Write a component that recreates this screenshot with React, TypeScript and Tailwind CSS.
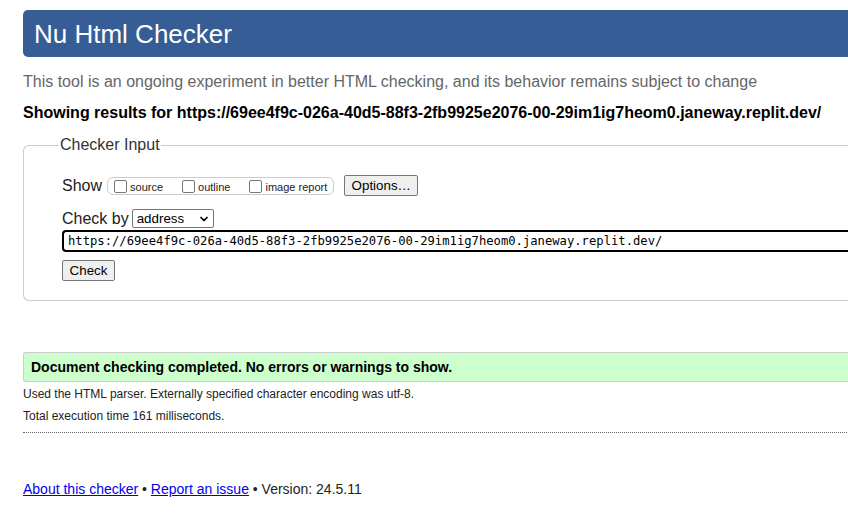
import { ChevronDown } from 'lucide-react'

const URL = 'https://69ee4f9c-026a-40d5-88f3-2fb9925e2076-00-29im1ig7heom0.janeway.replit.dev/'

function Checkbox({ label }: { label: string }) {
  return (
    <label className="flex items-center">
      <span className="w-[13px] h-[13px] border border-[#767676] rounded-[2px] bg-white mr-[3px] mt-[1px]" />
      <span className="text-[11px] mt-[3px] text-[#222]">{label}</span>
    </label>
  )
}

export default function App() {
  return (
    <div className="w-full h-[519px] overflow-hidden bg-white text-[#222]" style={{ fontFamily: '"Liberation Sans", Arial, sans-serif' }}>
      <div className="ml-[23px] w-[900px] pt-[10px]">
        {/* header */}
        <div className="h-[47px] bg-[#365d95] rounded-l-[5px] pl-[11px] flex items-center">
          <h1 className="text-white text-[26px] leading-none">Nu Html Checker</h1>
        </div>

        <p className="mt-[14px] text-[16px] leading-[22px] text-[#666]">
          This tool is an ongoing experiment in better HTML checking, and its behavior remains subject to change
        </p>
        <p className="mt-[10px] text-[16px] leading-[20px] font-bold text-black">Showing results for {URL}</p>

        {/* checker input */}
        <fieldset className="mt-[13px] h-[165px] border border-[#ccc] rounded-l-[6px] border-r-0 pl-[38px]">
          <legend className="text-[16px] leading-[18px] text-[#333] ml-[-3px] px-[1px]">Checker Input</legend>

          <div className="flex items-center mt-[21px] h-[21px]">
            <span className="text-[16px] mr-[5px]">Show</span>
            <div className="flex items-center h-[18px] border border-[#ccc] rounded-[6px] pl-[6px] pr-[6px] gap-[19px]">
              <Checkbox label="source" />
              <Checkbox label="outline" />
              <Checkbox label="image report" />
            </div>
            <button className="ml-[10px] h-[21px] w-[74px] border border-[#767676] rounded-[2px] bg-[#efefef] text-[13.33px] text-black">
              Options…
            </button>
          </div>

          <div className="flex items-center mt-[13px] h-[19px]">
            <span className="text-[16px] mr-[3px]">Check by</span>
            <div className="h-[19px] w-[82px] border border-[#767676] rounded-[2px] bg-white flex items-center justify-between pl-[4px] pr-[3px]">
              <span className="text-[13.33px] text-black leading-none">address</span>
              <ChevronDown size={12} strokeWidth={3.5} className="text-black" />
            </div>
          </div>

          <div className="mt-[2px] h-[22px] border-[2px] border-r-0 border-black rounded-l-[4px] flex items-center pl-[4px]">
            <span className="text-[12.2px] text-black leading-none" style={{ fontFamily: '"DejaVu Sans Mono", "Liberation Mono", monospace' }}>
              {URL}
            </span>
          </div>

          <button className="mt-[8px] h-[21px] w-[53px] border border-[#767676] rounded-[2px] bg-[#efefef] text-[13.33px] text-black">
            Check
          </button>
        </fieldset>

        {/* result */}
        <div className="mt-[51px] h-[30px] bg-[#ccffcc] border border-[#ccc] border-r-0 rounded-l-[3px] flex items-center pl-[7px]">
          <p className="font-bold text-[14px] text-black">Document checking completed. No errors or warnings to show.</p>
        </div>
        <p className="mt-[4px] text-[12px] leading-[16px] text-[#222]">Used the HTML parser. Externally specified character encoding was utf-8.</p>
        <p className="mt-[6px] text-[12px] leading-[16px] text-[#222]">Total execution time 161 milliseconds.</p>
        <div className="mt-[8px] border-t border-dotted border-[#666]" />

        {/* footer */}
        <p className="mt-[47px] text-[14px] leading-[18px] text-[#222]">
          <a href="#" className="text-[#0000ee] underline">About this checker</a>
          {' • '}
          <a href="#" className="text-[#0000ee] underline">Report an issue</a>
          {' • Version: 24.5.11'}
        </p>
      </div>
    </div>
  )
}
